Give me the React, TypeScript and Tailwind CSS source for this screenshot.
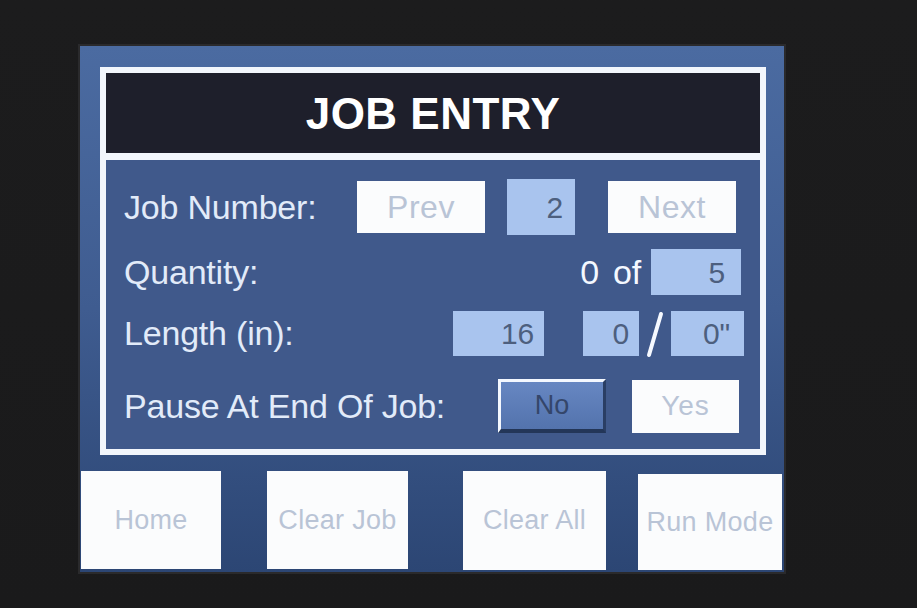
import React from 'react';

const font = { fontFamily: '"Liberation Sans", Arial, sans-serif' };

const WhiteButton: React.FC<{ label: string; className: string }> = ({ label, className }) => (
  <div className={`flex items-center justify-center bg-[#fbfcfd] text-[#b9c4d6] ${className}`}>
    {label}
  </div>
);

const ValueBox: React.FC<{ value: string; className: string }> = ({ value, className }) => (
  <div className={`flex items-center justify-end bg-[#a9c4ee] pr-[10px] text-[30px] text-[#4d5f7e] ${className}`}>
    {value}
  </div>
);

const App: React.FC = () => {
  return (
    <div
      className="relative h-[608px] w-[917px] overflow-hidden bg-gradient-to-b from-[#1c1c1d] to-[#1a1a1b] pl-[80px] pt-[46px]"
      style={font}
    >
      {/* Screen */}
      <div className="flex h-[526px] w-[704px] flex-col bg-gradient-to-b from-[#4b6ba1] via-[#3f5c90] to-[#2c4674] shadow-[0_0_0_2px_#2a2a2c]">
        {/* Framed panel */}
        <div className="ml-[20px] mt-[21px] flex h-[388px] w-[666px] flex-col border-[6px] border-[#f2f6fc] bg-[#40598b]">
          {/* Title */}
          <div className="flex h-[87px] shrink-0 items-center justify-center border-b-[7px] border-[#f2f6fc] bg-[#1e1f2b]">
            <span className="pt-[2px] text-[44px] font-bold tracking-[0.5px] text-white">JOB ENTRY</span>
          </div>

          {/* Rows */}
          <div className="flex flex-col pl-[18px] text-[34px] tracking-[-0.2px] text-[#e2ebf9]">
            {/* Job number */}
            <div className="mt-[19px] flex h-[56px] items-center">
              <span className="w-[233px]">Job Number:</span>
              <WhiteButton label="Prev" className="h-[52px] w-[128px] text-[32px] tracking-[0.5px]" />
              <ValueBox value="2" className="ml-[22px] h-[56px] w-[68px] pr-[12px]" />
              <WhiteButton label="Next" className="ml-[33px] h-[52px] w-[128px] text-[32px] tracking-[0.5px]" />
            </div>

            {/* Quantity */}
            <div className="mt-[14px] flex h-[46px] items-center pr-[19px]">
              <span className="flex-1">Quantity:</span>
              <span className="text-[34px] text-[#f4f8ff]">0</span>
              <span className="ml-[14px] text-[34px] text-[#f4f8ff]">of</span>
              <ValueBox value="5" className="ml-[10px] h-[46px] w-[90px] pr-[16px]" />
            </div>

            {/* Length */}
            <div className="mt-[16px] flex h-[45px] items-center pr-[16px]">
              <span className="flex-1">Length (in):</span>
              <ValueBox value="16" className="h-[45px] w-[91px] pr-[8px]" />
              <ValueBox value="0" className="ml-[39px] h-[45px] w-[56px] pr-[8px]" />
              <svg width="32" height="48" viewBox="0 0 32 48">
                <line x1="22" y1="4" x2="10" y2="45" stroke="#f6f9ff" strokeWidth="4" strokeLinecap="round" />
              </svg>
              <ValueBox value={'0"'} className="h-[45px] w-[73px] pr-[14px]" />
            </div>

            {/* Pause */}
            <div className="mt-[22px] flex h-[56px] items-center pr-[21px]">
              <span className="flex-1">Pause At End Of Job:</span>
              <div className="flex h-[54px] w-[108px] items-center justify-center border-b-[4px] border-l-[3px] border-r-[3px] border-t-[3px] border-b-[#233658] border-l-[#f4f8ff] border-r-[#2a3e64] border-t-[#f4f8ff] bg-gradient-to-b from-[#6787c2] to-[#5373ad] text-[27px] tracking-[0px] text-[#34466a]">
                No
              </div>
              <WhiteButton label="Yes" className="ml-[26px] h-[53px] w-[107px] text-[28px] tracking-[1px]" />
            </div>
          </div>
        </div>

        {/* Bottom buttons */}
        <div className="mt-[16px] flex items-start text-[27px] tracking-[0.3px]">
          <WhiteButton label="Home" className="ml-[1px] h-[98px] w-[140px]" />
          <WhiteButton label="Clear Job" className="ml-[46px] h-[98px] w-[141px]" />
          <WhiteButton label="Clear All" className="ml-[55px] h-[99px] w-[143px]" />
          <WhiteButton label="Run Mode" className="ml-[32px] mt-[3px] h-[96px] w-[144px]" />
        </div>
      </div>
    </div>
  );
};

export default App;
